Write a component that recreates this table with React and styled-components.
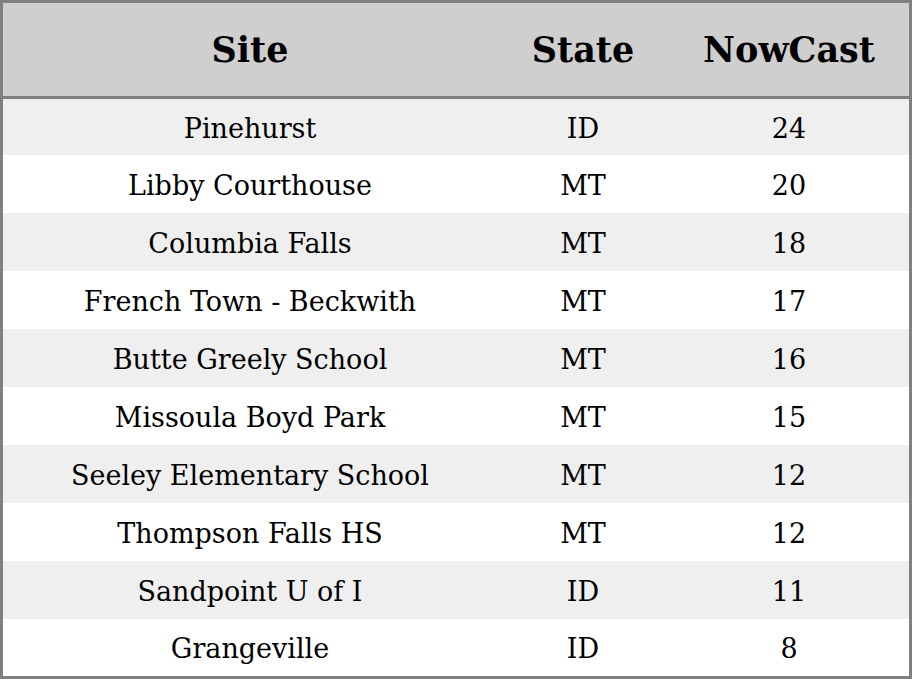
import styled, { createGlobalStyle } from "styled-components";

const GlobalStyle = createGlobalStyle`
  html, body {
    margin: 0;
    padding: 0;
    background: #ffffff;
  }
`;

const rows = [
    { site: "Pinehurst", state: "ID", nowcast: 24 },
    { site: "Libby Courthouse", state: "MT", nowcast: 20 },
    { site: "Columbia Falls", state: "MT", nowcast: 18 },
    { site: "French Town - Beckwith", state: "MT", nowcast: 17 },
    { site: "Butte Greely School", state: "MT", nowcast: 16 },
    { site: "Missoula Boyd Park", state: "MT", nowcast: 15 },
    { site: "Seeley Elementary School", state: "MT", nowcast: 12 },
    { site: "Thompson Falls HS", state: "MT", nowcast: 12 },
    { site: "Sandpoint U of I", state: "ID", nowcast: 11 },
    { site: "Grangeville", state: "ID", nowcast: 8 },
];

const Frame = styled.div`
    width: 912px;
    height: 679px;
    box-sizing: border-box;
    border: 3px solid #808080;
    overflow: hidden;
    font-family: "DejaVu Serif", serif;
    color: #000000;
`;

const Table = styled.table`
    width: 906px;
    border-collapse: collapse;
    table-layout: fixed;
`;

const HeadCell = styled.th`
    width: ${props => props.w};
    height: 93px;
    padding: 0;
    background: #cfcfcf;
    border-bottom: 3px solid #808080;
    font-size: 35px;
    font-weight: bold;
    line-height: 1;
    text-align: center;
    vertical-align: middle;
`;

const Row = styled.tr`
    background: ${props => props.shade ? "#efefef" : "#ffffff"};

    &:first-child td{
        height: 54px;
    }

    &:last-child td{
        height: 55px;
    }
`;

const Cell = styled.td`
    height: 56px;
    padding: 2px 0 0 0;
    font-size: 27px;
    line-height: 1;
    text-align: center;
    vertical-align: middle;
`;

export default function App(){
    return(
        <>
            <GlobalStyle />
            <Frame>
                <Table>
                    <thead>
                        <tr>
                            <HeadCell w="494px">Site</HeadCell>
                            <HeadCell w="172px">State</HeadCell>
                            <HeadCell w="240px">NowCast</HeadCell>
                        </tr>
                    </thead>
                    <tbody>
                        {rows.map((r, i) => (
                            <Row key={r.site} shade={i % 2 === 0}>
                                <Cell>{r.site}</Cell>
                                <Cell>{r.state}</Cell>
                                <Cell>{r.nowcast}</Cell>
                            </Row>
                        ))}
                    </tbody>
                </Table>
            </Frame>
        </>
    )
}
